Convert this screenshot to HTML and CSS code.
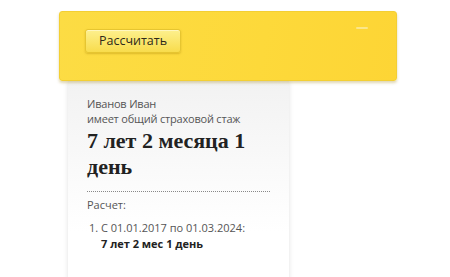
FILE: index.html
```html
<!DOCTYPE html>
<html lang="ru">
<head>
    <meta charset="UTF-8">
    <meta name="viewport" content="width=device-width, initial-scale=1.0">
    <title>Калькулятор стажа</title>
    <link rel="stylesheet" href="styles.css">
</head>
<body>
    <div class="calc">
        <div class="panel">
            <button class="calc-button">Рассчитать</button>
            <span class="panel-mark"></span>
        </div>

        <div class="result">
            <p class="result-name">Иванов Иван</p>
            <p class="result-label">имеет общий страховой стаж</p>
            <h2 class="result-total">7 лет 2 месяца 1 день</h2>

            <div class="result-details">
                <p class="details-title">Расчет:</p>
                <ol class="details-list">
                    <li>
                        С 01.01.2017 по 01.03.2024:
                        <b>7 лет 2 мес 1 день</b>
                    </li>
                </ol>
            </div>
        </div>
    </div>
</body>
</html>
```

FILE: styles.css
```css
body {
    margin: 0;
    padding: 0;
    background-color: #ffffff;
    font-family: 'Open Sans', 'Noto Sans', sans-serif;
    color: #555555;
}
.calc {
    padding: 11px 0 0 59px;
    width: 338px;
}
.panel {
    position: relative;
    z-index: 1;
    height: 70px;
    padding: 16px 0 0 25px;
    box-sizing: border-box;
    background: linear-gradient(100deg, #fcdc44 0%, #fdd93a 60%, #fdd535 100%);
    border: 1px solid #f3cf33;
    border-radius: 3px;
    box-shadow: 0 2px 3px rgba(150, 120, 0, 0.3);
}
.calc-button {
    width: 96px;
    height: 24px;
    padding: 0;
    font-family: 'Open Sans', 'Noto Sans', sans-serif;
    font-size: 12.5px;
    color: #2e2a1a;
    background: linear-gradient(#fdf08e, #f8dc4c);
    border: 1px solid #e6c530;
    border-radius: 3px;
    box-shadow: 0 1px 2px rgba(160, 120, 0, 0.35), inset 0 1px 0 #fff7c0;
    cursor: pointer;
}
.panel-mark {
    position: absolute;
    top: 15px;
    right: 28px;
    width: 12px;
    height: 2px;
    background: #fbe68a;
    border-radius: 1px;
}
.result {
    width: 221px;
    margin-left: 9px;
    padding: 15px 19px 30px;
    box-sizing: border-box;
    background: linear-gradient(#f2f2f2 0%, #fafafa 45%, #ffffff 75%);
    box-shadow: 0 0 5px rgba(0, 0, 0, 0.12);
}
.result-name,
.result-label {
    margin: 0;
    font-size: 11px;
    line-height: 15px;
    letter-spacing: -0.2px;
}
.result-total {
    margin: 2px 0 0;
    font-family: 'Liberation Serif', 'DejaVu Serif', serif;
    font-size: 22px;
    line-height: 26px;
    font-weight: bold;
    color: #222222;
}
.result-details {
    margin-top: 11px;
    padding-top: 5px;
    border-top: 1px dotted #888888;
}
.details-title {
    margin: 0;
    font-size: 11px;
    line-height: 16px;
}
.details-list {
    margin: 7px 0 0;
    padding-left: 14px;
    font-size: 11px;
    line-height: 16px;
}
.details-list b {
    display: block;
    color: #222222;
}
```
